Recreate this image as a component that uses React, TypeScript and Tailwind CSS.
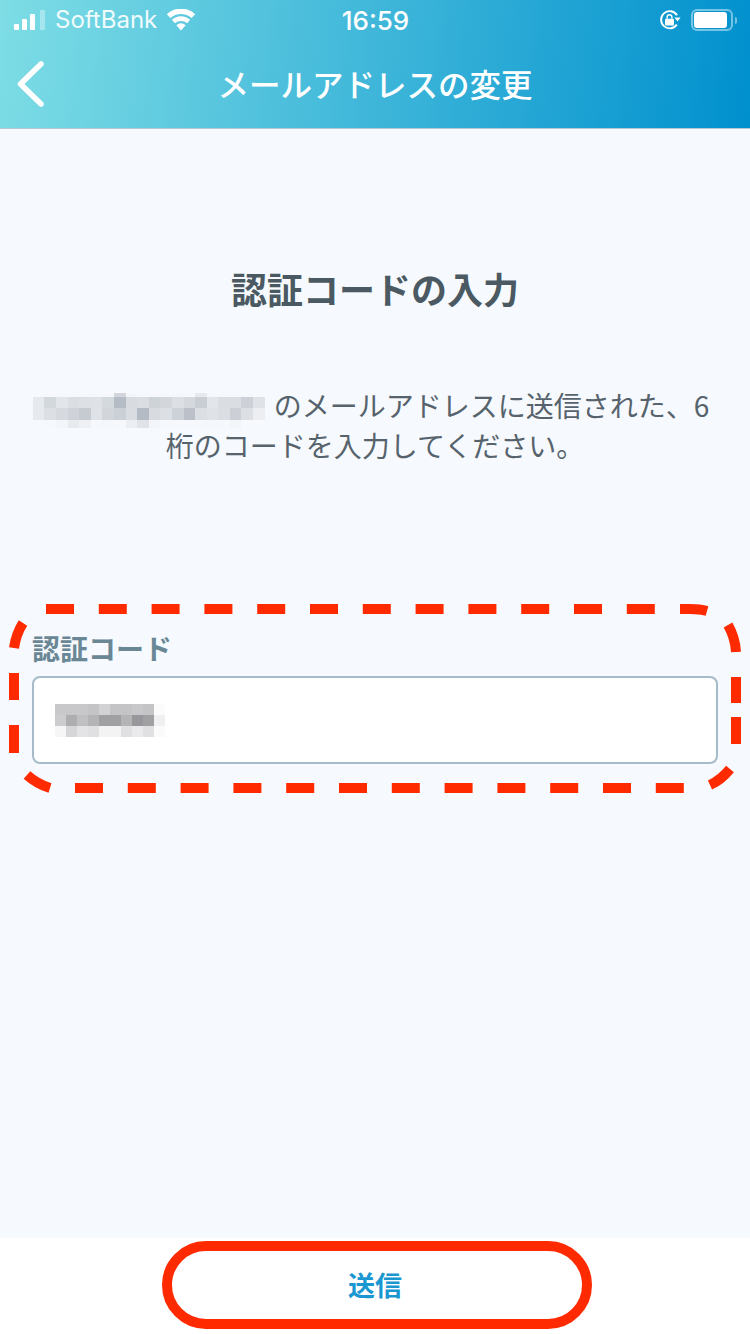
const emailMosaic = [
  ["#f7f9fc", "#f6f8fb", "#f6f8fb", "#f6f8fb", "#f6f8fb", "#f6f8fb", "#f5f7fa", "#d3d7dd", "#f4f6f9", "#f6f8fb", "#f6f8fb", "#f6f8fb", "#f5f7fa", "#f6f8fb", "#e6e9ed", "#f6f8fb", "#f6f8fb", "#f6f8fb", "#f6f8fb", "#f7f9fc"],
  ["#e6e9ed", "#d3d8dd", "#e2e5e9", "#dbdfe3", "#dde0e4", "#dee1e5", "#d4d9de", "#b6bcc5", "#d8dce1", "#dadee3", "#ced3d8", "#d3d7dc", "#dce0e4", "#d5d9de", "#c9ced4", "#e2e5e9", "#dadde2", "#dadde2", "#cdd1d7", "#dfe2e6"],
  ["#e6e9ed", "#dce0e4", "#d6dade", "#cfd3d9", "#c6cbd2", "#dfe2e6", "#d2d6db", "#cbd0d6", "#d9dde1", "#b5bbc4", "#d8dbe0", "#dce0e4", "#cdd2d8", "#bcc1c9", "#dbdfe3", "#dfe2e6", "#dbdfe3", "#ccd0d6", "#dcdfe3", "#eceef1"],
  ["#f7f9fc", "#f6f8fb", "#f3f5f8", "#e8ebee", "#eef0f3", "#f6f8fb", "#f5f7fa", "#f6f8fb", "#eceef2", "#e0e3e7", "#f3f5f8", "#f6f8fb", "#f6f8fb", "#f6f8fb", "#f6f8fb", "#f5f7fa", "#f6f8fb", "#f3f5f8", "#f7f9fc", "#f7f9fc"],
]

const codeMosaic = [
  ["#c8c8ca", "#c8c8ca", "#c8c8ca", "#c4c4c6", "#d2d2d4", "#c4c4c6", "#c4c4c6", "#c8c8ca", "#c4c4c6", "#fbfbfb"],
  ["#cccccf", "#aeaeb1", "#c0c0c3", "#b4b4b7", "#a0a0a3", "#a0a0a3", "#b4b4b7", "#98989c", "#a0a0a3", "#f0f0f2"],
  ["#f6f6f7", "#d6d6d8", "#e4e4e6", "#e0e0e2", "#f3f3f4", "#f3f3f4", "#e0e0e2", "#eaeaec", "#e0e0e2", "#fafafa"],
]

function Mosaic({ rows, heights, cell }: { rows: string[][]; heights: number[]; cell: number }) {
  return (
    <span className="inline-flex flex-col align-middle">
      {rows.map((row, i) => (
        <span key={i} className="flex">
          {row.map((color, j) => (
            <span key={j} style={{ width: cell, height: heights[i], backgroundColor: color }} />
          ))}
        </span>
      ))}
    </span>
  )
}

function StatusBar() {
  return (
    <div className="grid h-10 grid-cols-3 items-center pl-[14px] pr-[13px] font-['Inter',sans-serif] text-[24px] text-white">
      <div className="flex items-center">
        <div className="flex h-[20px] items-end">
          <span className="h-[6px] w-[5px] rounded-[1px] bg-white" />
          <span className="ml-[3px] h-[11px] w-[5px] rounded-[1px] bg-white" />
          <span className="ml-[3px] h-[16px] w-[5px] rounded-[1px] bg-white" />
          <span className="ml-[5px] h-[20px] w-[5px] rounded-[1px] bg-white/35" />
        </div>
        <span className="ml-[10px] text-white/90">SoftBank</span>
        <svg className="ml-[9px]" width="30" height="22" viewBox="0 0 30 22" fill="white">
          <path d="M15 21.5 L10.4 16.2 A6.6 6.6 0 0 1 19.6 16.2 Z" />
          <path d="M8.9 14.2 L5.9 10.8 A13.4 13.4 0 0 1 24.1 10.8 L21.1 14.2 A9.4 9.4 0 0 0 8.9 14.2 Z" />
          <path d="M4.4 9 L0.8 5.2 A20.6 20.6 0 0 1 29.2 5.2 L25.6 9 A16 16 0 0 0 4.4 9 Z" />
        </svg>
      </div>
      <div className="text-center text-[26px] font-medium">16:59</div>
      <div className="flex items-center justify-end gap-[10px]">
        <svg width="22" height="22" viewBox="0 0 22 22" fill="none">
          <path d="M17.8 15.6 A8.6 8.6 0 1 1 18 6.2" stroke="white" strokeWidth="1.9" />
          <path d="M15.4 8.6 H21.6 L18.5 12.4 Z" fill="white" />
          <rect x="6" y="9.8" width="9" height="6.6" rx="1" fill="white" />
          <path d="M8.1 9.8 V8.2 a2.4 2.4 0 0 1 4.8 0 V9.8" stroke="white" strokeWidth="1.4" />
        </svg>
        <div className="flex items-center gap-[2px]">
          <div className="flex h-[22px] w-[42px] rounded-[6px] border-2 border-white/45 py-[1px] pl-[1px] pr-[4px]">
            <div className="flex-1 rounded-[3px] bg-white" />
          </div>
          <span className="h-[7px] w-[2px] rounded-r-sm bg-white/45" />
        </div>
      </div>
    </div>
  )
}

function DashedMark() {
  return (
    <svg className="pointer-events-none absolute left-0 top-0" width="750" height="1334" fill="none" stroke="#ff2a00" strokeWidth="10">
      <path d="M46 609 H670" strokeDasharray="28 24.8" />
      <path d="M680 609 H690 Q700 609 707 611" />
      <path d="M23 623 Q16 634 14 648" />
      <path d="M14 673 V700" />
      <path d="M14 725 V753" />
      <path d="M27 775 Q37 784 50 788" />
      <path d="M75 788 H684" strokeDasharray="28 24.8" />
      <path d="M728 625 Q735 637 736 652" />
      <path d="M736 677 V703" />
      <path d="M736 717 V744" />
      <path d="M710 785 Q721 780 730 769" />
    </svg>
  )
}

export default function App() {
  return (
    <div className="relative flex h-[1334px] w-[750px] flex-col overflow-hidden bg-[#f6f9fd] font-['Noto_Sans_CJK_JP',sans-serif]">
      <header className="h-[129px] border-b border-[#b3c8d0] bg-[linear-gradient(97deg,#7edde5,#0090ce)]">
        <StatusBar />
        <div className="relative flex h-[88px] items-center justify-center">
          <svg className="absolute left-[14px] top-[20px]" width="32" height="48" viewBox="0 0 32 48" fill="none">
            <path d="M27 4 L6.5 24 L27 44" stroke="white" strokeWidth="5.5" strokeLinecap="round" strokeLinejoin="round" />
          </svg>
          <h1 className="text-[31.5px] font-medium text-white">メールアドレスの変更</h1>
        </div>
      </header>

      <main className="flex-1 px-8 pt-[137px]">
        <h2 className="text-center text-[36px] font-semibold leading-[44px] text-[#4a5962]">認証コードの入力</h2>
        <p className="mt-[75px] text-center text-[28px] leading-[40px] text-[#56636c]">
          <span className="-mb-[8px] -mt-[12px] ml-[-8px] mr-[9px] inline-block align-middle">
            <Mosaic rows={emailMosaic} heights={[4, 11, 12, 8]} cell={11.6} />
          </span>
          のメールアドレスに送信された、6桁のコードを入力してください。
        </p>
        <label className="mt-[165px] block text-[28px] font-semibold leading-[36px] text-[#6a8796]">認証コード</label>
        <div className="mt-[10px] flex h-[88px] items-center rounded-[8px] border-2 border-[#a5bcc8] bg-white pl-[21px]">
          <Mosaic rows={codeMosaic} heights={[11, 11, 11]} cell={11} />
        </div>
      </main>

      <footer className="flex h-[96px] justify-center bg-white pl-[4px] pt-[3px]">
        <button className="h-[88px] w-[430px] rounded-full border-[10px] border-[#ff2a00] bg-white pr-[4px] text-[27px] font-bold text-[#1a96d0]">
          送信
        </button>
      </footer>

      <DashedMark />
    </div>
  )
}
